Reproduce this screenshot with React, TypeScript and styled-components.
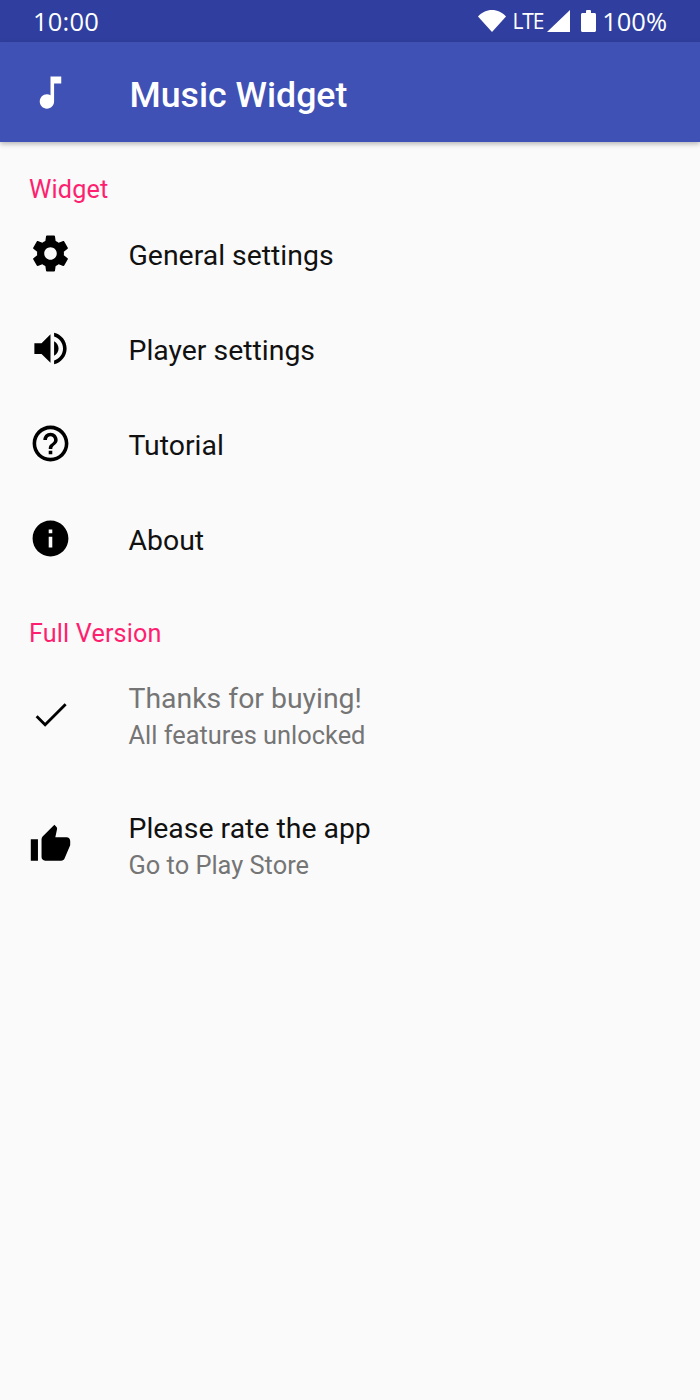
import React from "react";
import styled, { createGlobalStyle } from "styled-components";

const GlobalStyle = createGlobalStyle`
  html, body { margin: 0; padding: 0; background: #fafafa; }
  body { font-family: Roboto, "Liberation Sans", sans-serif; }
`;

const Screen = styled.div`
  width: 700px;
  height: 1400px;
  display: flex;
  flex-direction: column;
  background: #fafafa;
  overflow: hidden;
`;

const StatusBar = styled.div`
  height: 42px;
  flex: none;
  display: flex;
  align-items: center;
  justify-content: space-between;
  padding: 0 33px 0 33px;
  background: #303f9f;
  color: #fff;
`;

const Clock = styled.span`
  font-family: "Open Sans", sans-serif;
  font-size: 25.5px;
  letter-spacing: 0.2px;
  line-height: 42px;
`;

const StatusGroup = styled.div`
  display: flex;
  align-items: center;
`;

const NetworkLabel = styled.span`
  font-family: "Open Sans", sans-serif;
  font-size: 21px;
  letter-spacing: -1.2px;
  margin: 0 4px 0 7px;
`;

const Percent = styled.span`
  font-family: "Open Sans", sans-serif;
  font-size: 25.5px;
  margin-left: 6px;
`;

const StatusIcon = styled.svg<{ $gap?: number }>`
  display: block;
  fill: #fff;
  flex: none;
  margin-left: ${(p) => p.$gap ?? 0}px;
`;

const AppBar = styled.header`
  height: 100px;
  flex: none;
  display: flex;
  align-items: center;
  padding-left: 29px;
  background: #3f51b5;
  box-shadow: 0 2px 5px rgba(0, 0, 0, 0.28);
  position: relative;
`;

const AppTitle = styled.h1`
  margin: 6px 0 0 57.5px;
  font-size: 35.7px;
  font-weight: 500;
  color: #fff;
`;

const Icon = styled.svg<{ $color?: string; $lift?: number }>`
  width: 43px;
  height: 43px;
  flex: none;
  display: block;
  fill: ${(p) => p.$color ?? "#000"};
  margin-bottom: ${(p) => p.$lift ?? 0}px;
`;

const SectionTitle = styled.div<{ $top: number }>`
  height: 35px;
  margin-top: ${(p) => p.$top}px;
  padding-left: 29px;
  font-size: 25.2px;
  font-weight: 400;
  letter-spacing: 0.15px;
  line-height: 35px;
  color: #ff1f70;
`;

const Row = styled.div<{ $tall?: boolean }>`
  height: ${(p) => (p.$tall ? 130 : 95)}px;
  display: flex;
  align-items: center;
  padding-left: 28.5px;
`;

const RowText = styled.div`
  margin-left: 57px;
  padding-top: 2px;
  display: flex;
  flex-direction: column;
`;

const RowTitle = styled.div<{ $muted?: boolean }>`
  font-size: 28.4px;
  line-height: 37px;
  color: ${(p) => (p.$muted ? "#757575" : "#111")};
`;

const RowSubtitle = styled.div`
  font-size: 25.4px;
  line-height: 37px;
  color: #757575;
`;

const paths = {
  note: "M12 3v10.55c-.59-.34-1.27-.55-2-.55-2.21 0-4 1.79-4 4s1.79 4 4 4 4-1.79 4-4V7h4V3h-6z",
  gear: "M19.43 12.98c.04-.32.07-.64.07-.98s-.03-.66-.07-.98l2.11-1.65c.19-.15.24-.42.12-.64l-2-3.46c-.12-.22-.39-.3-.61-.22l-2.49 1c-.52-.4-1.08-.73-1.69-.98l-.38-2.65C14.46 2.18 14.25 2 14 2h-4c-.25 0-.46.18-.49.42l-.38 2.65c-.61.25-1.17.59-1.69.98l-2.49-1c-.23-.09-.49 0-.61.22l-2 3.46c-.13.22-.07.49.12.64l2.11 1.65c-.04.32-.07.65-.07.98s.03.66.07.98l-2.11 1.65c-.19.15-.24.42-.12.64l2 3.46c.12.22.39.3.61.22l2.49-1c.52.4 1.08.73 1.69.98l.38 2.65c.03.24.24.42.49.42h4c.25 0 .46-.18.49-.42l.38-2.65c.61-.25 1.17-.59 1.69-.98l2.49 1c.23.09.49 0 .61-.22l2-3.46c.12-.22.07-.49-.12-.64l-2.11-1.65zM12 15.5c-1.93 0-3.5-1.57-3.5-3.5s1.57-3.5 3.5-3.5 3.5 1.57 3.5 3.5-1.57 3.5-3.5 3.5z",
  volume: "M3 9v6h4l5 5V4L7 9H3zm13.5 3c0-1.77-1.02-3.29-2.5-4.03v8.05c1.48-.73 2.5-2.25 2.5-4.02zM14 3.23v2.06c2.89.86 5 3.54 5 6.71s-2.11 5.85-5 6.71v2.06c4.01-.91 7-4.49 7-8.77s-2.99-7.86-7-8.77z",
  help: "M11 18h2v-2h-2v2zm1-16C6.48 2 2 6.48 2 12s4.48 10 10 10 10-4.48 10-10S17.52 2 12 2zm0 18c-4.41 0-8-3.59-8-8s3.59-8 8-8 8 3.59 8 8-3.59 8-8 8zm0-14c-2.21 0-4 1.79-4 4h2c0-1.1.9-2 2-2s2 .9 2 2c0 2-3 1.75-3 5h2c0-2.25 3-2.5 3-5 0-2.21-1.79-4-4-4z",
  info: "M12 2C6.48 2 2 6.48 2 12s4.48 10 10 10 10-4.48 10-10S17.52 2 12 2zm1 15h-2v-6h2v6zm0-8h-2V7h2v2z",
  check: "M9 16.6 4.8 12.4 3.7 13.5 9 18.8 21 6.8 19.9 5.7z",
  thumb: "M1 21h4V9H1v12zm22-11c0-1.1-.9-2-2-2h-6.31l.95-4.57.03-.32c0-.41-.17-.79-.44-1.06L14.17 1 7.59 7.59C7.22 7.95 7 8.45 7 9v10c0 1.1.9 2 2 2h9c.83 0 1.54-.5 1.84-1.22l3.02-7.05c.09-.23.14-.47.14-.73v-2z",
};

const Glyph = ({ d, color, lift }: { d: string; color?: string; lift?: number }) => (
  <Icon viewBox="0 0 24 24" $color={color} $lift={lift}>
    <path d={d} />
  </Icon>
);

export default function App() {
  return (
    <Screen>
      <GlobalStyle />
      <StatusBar>
        <Clock>10:00</Clock>
        <StatusGroup>
          <StatusIcon width="28" height="22" viewBox="0 0 28 22">
            <path d="M14 22 0 6.500C3.600 2.600 8.600 0 14 0s10.400 2.600 14 6.500L14 22z" />
          </StatusIcon>
          <NetworkLabel>LTE</NetworkLabel>
          <StatusIcon width="23" height="22" viewBox="0 0 23 22">
            <path d="M0 22 23 0v22H0z" />
          </StatusIcon>
          <StatusIcon $gap={11} width="15" height="22" viewBox="0 0 15 22">
            <path d="M1.500 3H5V1.200C5 .5 5.500 0 6.200 0h2.600c.7 0 1.200.5 1.200 1.200V3h3.500c.8 0 1.500.7 1.500 1.500v16c0 .8-.7 1.500-1.500 1.500h-12C.7 22 0 21.300 0 20.500v-16C0 3.700 .7 3 1.500 3z" />
          </StatusIcon>
          <Percent>100%</Percent>
        </StatusGroup>
      </StatusBar>
      <AppBar>
        <Glyph d={paths.note} color="#fff" />
        <AppTitle>Music Widget</AppTitle>
      </AppBar>

      <SectionTitle $top={30}>Widget</SectionTitle>
      <Row><Glyph d={paths.gear} lift={3} /><RowText><RowTitle>General settings</RowTitle></RowText></Row>
      <Row><Glyph d={paths.volume} lift={2} /><RowText><RowTitle>Player settings</RowTitle></RowText></Row>
      <Row><Glyph d={paths.help} lift={2} /><RowText><RowTitle>Tutorial</RowTitle></RowText></Row>
      <Row><Glyph d={paths.info} lift={2} /><RowText><RowTitle>About</RowTitle></RowText></Row>

      <SectionTitle $top={29}>Full Version</SectionTitle>
      <Row $tall>
        <Glyph d={paths.check} lift={4} />
        <RowText>
          <RowTitle $muted>Thanks for buying!</RowTitle>
          <RowSubtitle>All features unlocked</RowSubtitle>
        </RowText>
      </Row>
      <Row $tall>
        <Glyph d={paths.thumb} lift={4} />
        <RowText>
          <RowTitle>Please rate the app</RowTitle>
          <RowSubtitle>Go to Play Store</RowSubtitle>
        </RowText>
      </Row>
    </Screen>
  );
}
